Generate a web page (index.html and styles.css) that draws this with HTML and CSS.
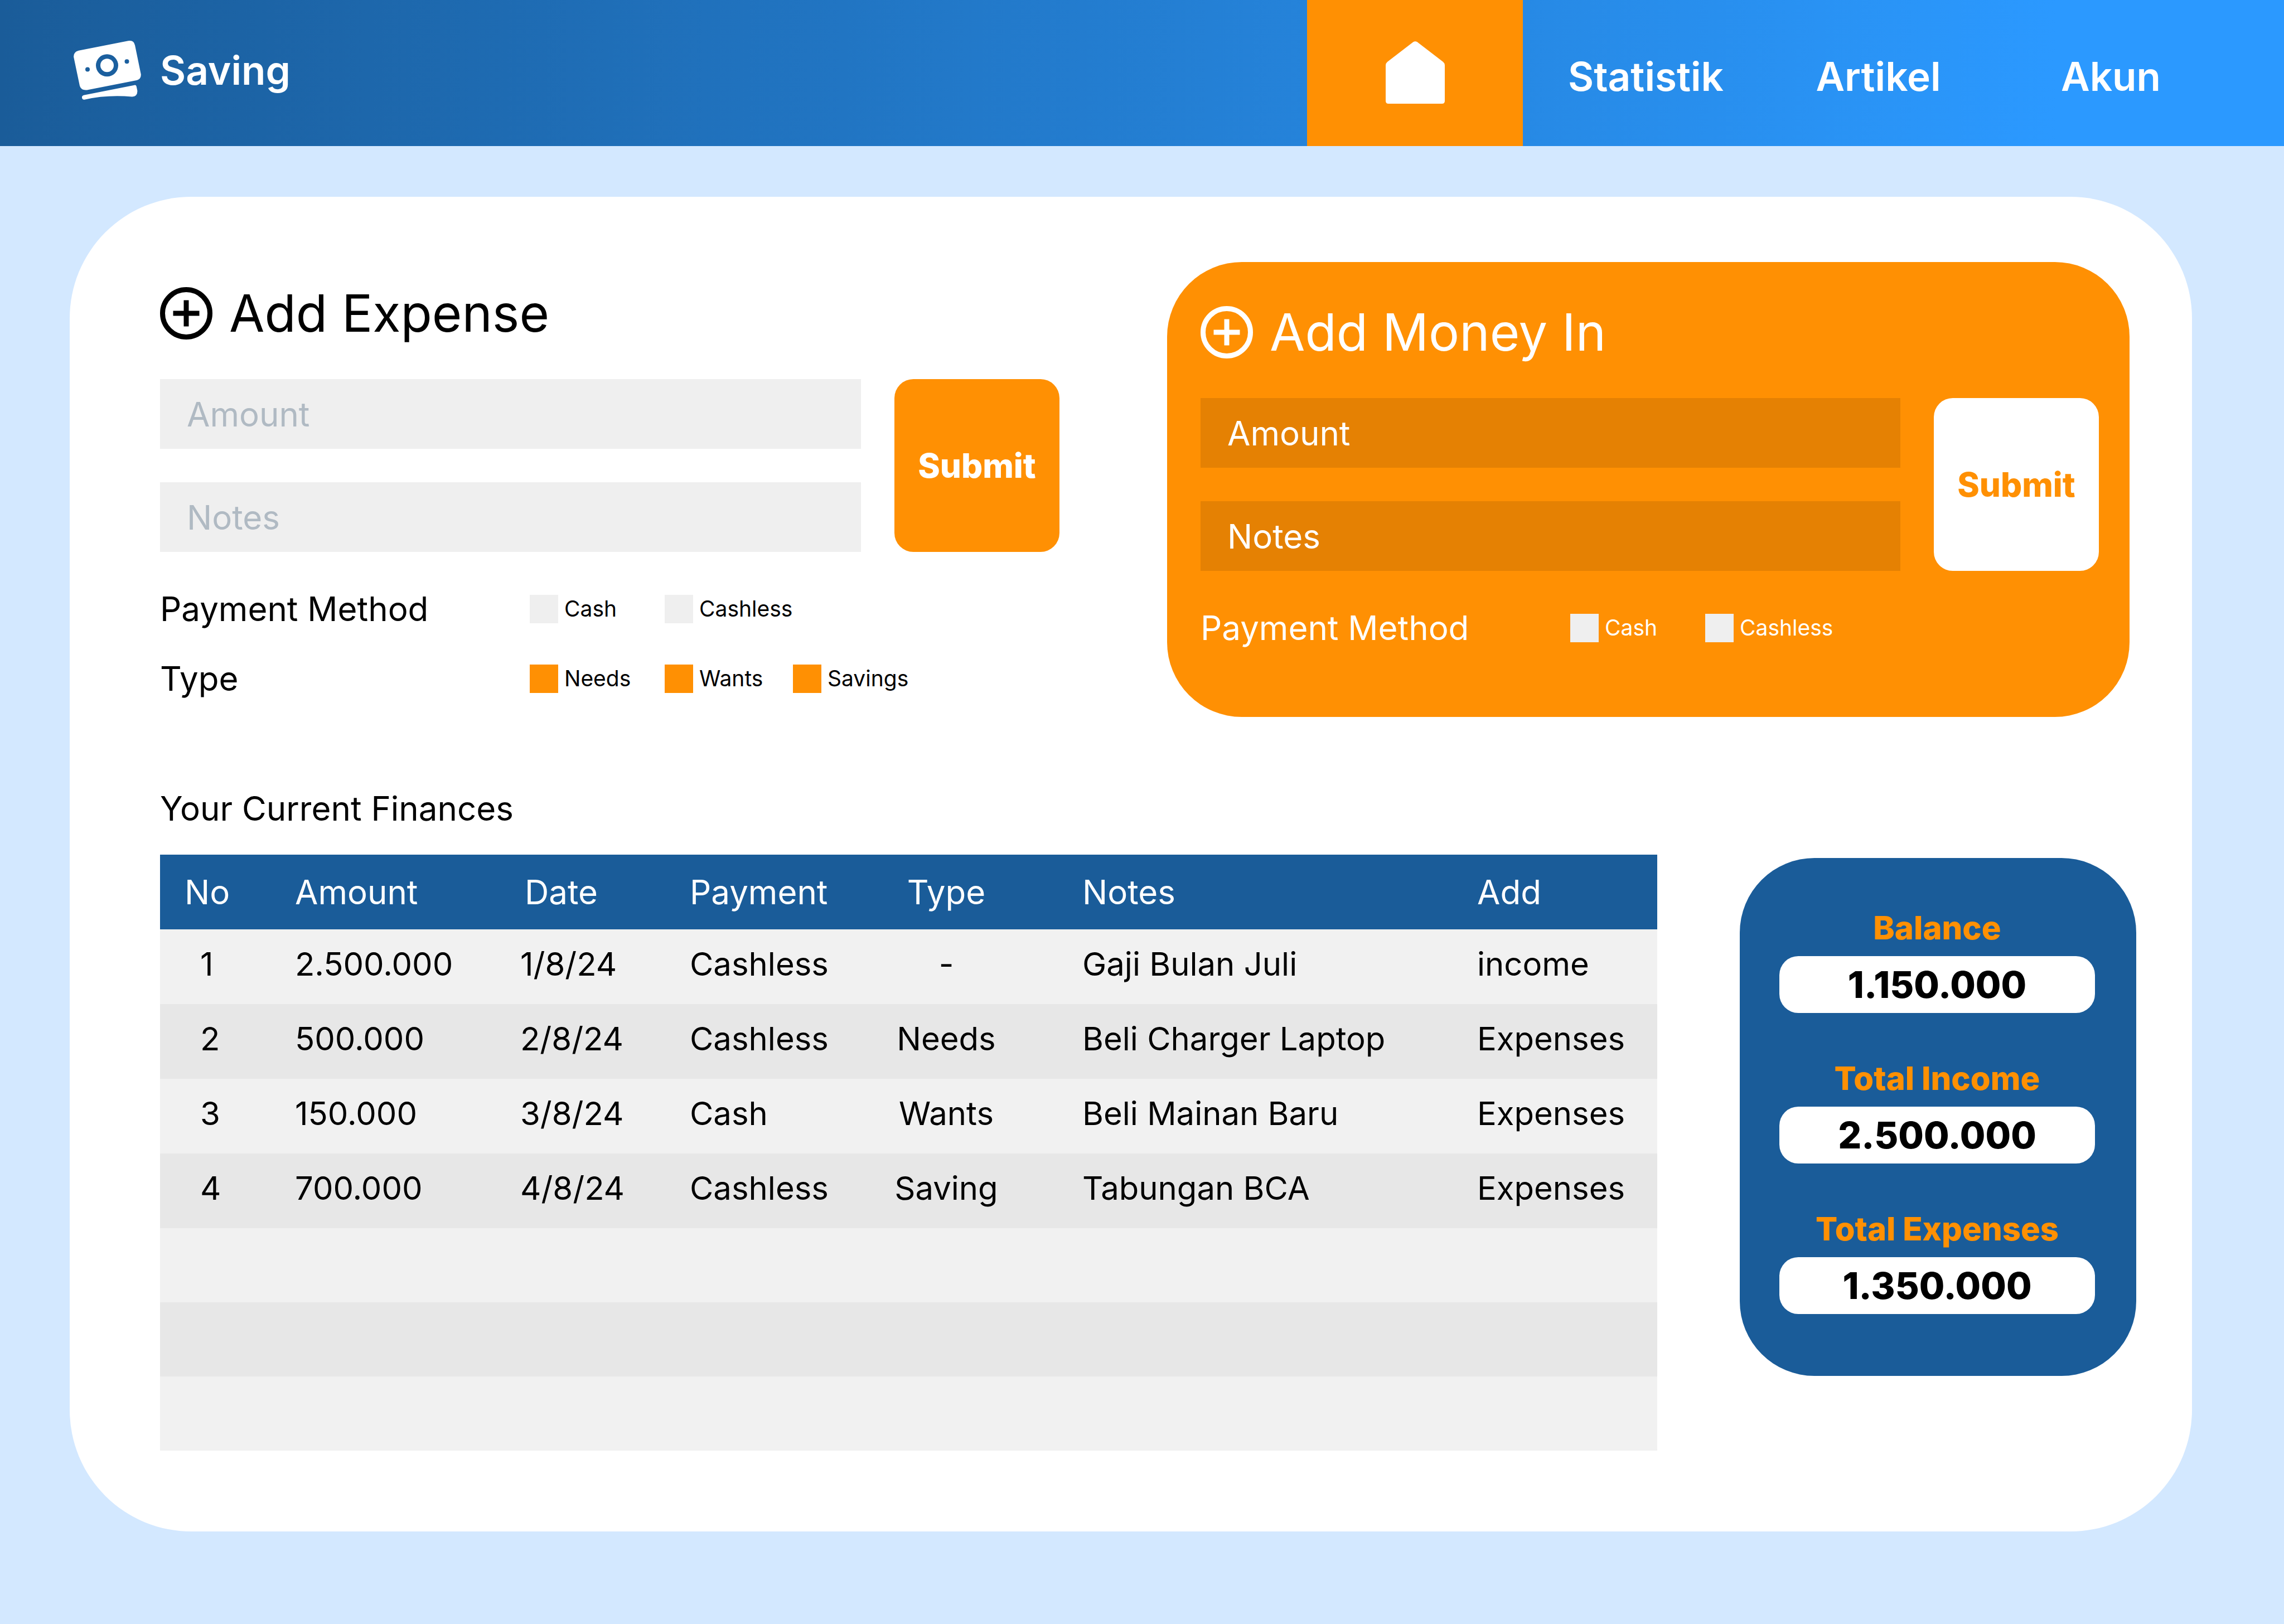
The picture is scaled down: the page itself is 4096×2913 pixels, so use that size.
FILE: index.html
```html
<!DOCTYPE html>
<html lang="id">
<head>
<meta charset="utf-8">
<meta name="viewport" content="width=device-width, initial-scale=1">
<title>Saving</title>
<link rel="stylesheet" href="styles.css">
</head>
<body>
<header class="topbar">
  <a class="brand" href="#">
    <svg class="brand-icon" viewBox="0 0 121 106" aria-hidden="true">
      <path fill="#fff" fill-rule="evenodd" d="M9 17.8 98 .3Q108 -1.500 110 8L120.700 60Q121.500 68.500 113 70.900L24 88.400Q13.500 89.500 11 81L.2 29.500Q-.8 20.500 9 17.800ZM60 24.300a20 20 0 1 0 0 40a20 20 0 1 0 0-40ZM25 47.400a4 4 0 1 0 0 8a4 4 0 1 0 0-8ZM95.500 33.200a4 4 0 1 0 0 8a4 4 0 1 0 0-8Z"/>
      <circle cx="60" cy="44.300" r="12" fill="#fff"/>
      <path fill="#fff" d="M18 97.800 109 79.700Q112 79.200 112.700 82L114.300 89.500Q115 100 105 100.500Q60 96.500 19.500 105.700Q16 106.300 15 102.500Q14.500 99 18 97.800Z"/>
    </svg>
    <span class="brand-name">Saving</span>
  </a>
  <nav class="nav">
    <a class="nav-home" href="#" aria-label="Home">
      <svg class="home-icon" viewBox="0 0 106 112" aria-hidden="true">
        <path fill="#fff" d="M49.500 1.300Q53 -.8 56.500 1.300L103 37Q106 39.500 106 43V107Q106 112 101 112H5Q0 112 0 107V43Q0 39.500 3 37Z"/>
      </svg>
    </a>
    <a class="nav-link" href="#">Statistik</a>
    <a class="nav-link" href="#">Artikel</a>
    <a class="nav-link" href="#">Akun</a>
  </nav>
</header>

<main class="page">
  <div class="panel">
    <div class="forms">
      <form class="entry">
        <h2 class="entry-title">
          <svg class="plus-icon" viewBox="0 0 94 94" fill="none" stroke="currentColor" stroke-width="9" aria-hidden="true"><circle cx="47" cy="47" r="42.500"/><path d="M47 23.500V70.500M23.500 47H70.500"/></svg>
          Add Expense
        </h2>
        <div class="fields">
          <input class="field" type="text" placeholder="Amount" aria-label="Amount">
          <input class="field" type="text" placeholder="Notes" aria-label="Notes">
          <button class="submit" type="button">Submit</button>
        </div>
        <div class="choices">
          <div class="choice-row" role="group" aria-labelledby="expense-method">
            <span class="choice-title" id="expense-method">Payment Method</span>
            <label class="choice"><input class="box" type="checkbox">Cash</label>
            <label class="choice"><input class="box" type="checkbox">Cashless</label>
          </div>
          <div class="choice-row" role="group" aria-labelledby="expense-type">
            <span class="choice-title" id="expense-type">Type</span>
            <label class="choice"><input class="box" type="checkbox" checked>Needs</label>
            <label class="choice"><input class="box" type="checkbox" checked>Wants</label>
            <label class="choice"><input class="box" type="checkbox" checked>Savings</label>
          </div>
        </div>
      </form>

      <form class="entry entry-income">
        <h2 class="entry-title">
          <svg class="plus-icon" viewBox="0 0 94 94" fill="none" stroke="currentColor" stroke-width="9" aria-hidden="true"><circle cx="47" cy="47" r="42.500"/><path d="M47 23.500V70.500M23.500 47H70.500"/></svg>
          Add Money In
        </h2>
        <div class="fields">
          <input class="field" type="text" placeholder="Amount" aria-label="Amount">
          <input class="field" type="text" placeholder="Notes" aria-label="Notes">
          <button class="submit" type="button">Submit</button>
        </div>
        <div class="choices">
          <div class="choice-row" role="group" aria-labelledby="income-method">
            <span class="choice-title" id="income-method">Payment Method</span>
            <label class="choice"><input class="box" type="checkbox">Cash</label>
            <label class="choice"><input class="box" type="checkbox">Cashless</label>
          </div>
        </div>
      </form>
    </div>

    <section class="finances">
      <h2 class="finances-title">Your Current Finances</h2>
      <table class="ledger">
        <colgroup>
          <col class="col-no"><col class="col-amount"><col class="col-date"><col class="col-payment"><col class="col-type"><col><col class="col-add">
        </colgroup>
        <thead>
          <tr><th class="no">No</th><th>Amount</th><th class="date">Date</th><th>Payment</th><th class="type">Type</th><th class="notes">Notes</th><th>Add</th></tr>
        </thead>
        <tbody>
          <tr><td class="no">1</td><td>2.500.000</td><td>1/8/24</td><td>Cashless</td><td class="type">-</td><td class="notes">Gaji Bulan Juli</td><td>income</td></tr>
          <tr><td class="no">2</td><td>500.000</td><td>2/8/24</td><td>Cashless</td><td class="type">Needs</td><td class="notes">Beli Charger Laptop</td><td>Expenses</td></tr>
          <tr><td class="no">3</td><td>150.000</td><td>3/8/24</td><td>Cash</td><td class="type">Wants</td><td class="notes">Beli Mainan Baru</td><td>Expenses</td></tr>
          <tr><td class="no">4</td><td>700.000</td><td>4/8/24</td><td>Cashless</td><td class="type">Saving</td><td class="notes">Tabungan BCA</td><td>Expenses</td></tr>
          <tr class="blank"><td colspan="7"></td></tr>
          <tr class="blank"><td colspan="7"></td></tr>
          <tr class="blank"><td colspan="7"></td></tr>
        </tbody>
      </table>
      <dl class="summary">
        <div class="summary-item"><dt class="summary-label">Balance</dt><dd class="summary-value">1.150.000</dd></div>
        <div class="summary-item"><dt class="summary-label">Total Income</dt><dd class="summary-value">2.500.000</dd></div>
        <div class="summary-item"><dt class="summary-label">Total Expenses</dt><dd class="summary-value">1.350.000</dd></div>
      </dl>
    </section>
  </div>
</main>
</body>
</html>
```
FILE: styles.css
```css
:root {
  --blue: #1a5c99;
  --orange: #ff9003;
  --orange-dark: #e58103;
  --gray: #efefef;
}

*, *::before, *::after { box-sizing: border-box; }

body {
  display: flex;
  flex-direction: column;
  min-height: 100vh;
  margin: 0;
  background: #d3e8ff;
  color: #000;
  font-family: Inter, sans-serif;
  font-size: 60px;
  line-height: 60px;
}

h2, dl, dd { margin: 0; font-weight: 400; }
a { color: inherit; text-decoration: none; }
input, button { margin: 0; border: 0; font: inherit; }

/* Top bar */
.topbar {
  display: flex;
  justify-content: space-between;
  height: 262px;
  padding: 0 102px 0 132px;
  background: linear-gradient(90deg, var(--blue), #2b99ff 90%);
  color: #fff;
  font-size: 71px;
  font-weight: 600;
  line-height: 80px;
}
.brand { display: flex; align-items: center; gap: 34px; padding-bottom: 10px; }
.brand-icon { width: 121px; height: 106px; }
.nav { display: flex; }
.nav-home {
  display: flex;
  align-items: center;
  justify-content: center;
  width: 387px;
  margin-right: 12px;
  padding-bottom: 3px;
  background: var(--orange);
}
.home-icon { width: 106px; height: 112px; }
.nav-link {
  display: flex;
  align-items: center;
  justify-content: center;
  width: 417px;
  padding-top: 12px;
}

/* White sheet */
.page { display: flex; flex: 1; padding: 91px 165px 166px 125px; }
.panel {
  flex: 1;
  padding: 117px 100px 145px 162px;
  border-radius: 218px;
  background: #fff;
}

/* Entry forms */
.forms {
  display: grid;
  grid-template-columns: 1613fr 1726fr;
  gap: 193px;
  padding-right: 12px;
}
.entry { padding-top: 45px; }
.entry-income {
  padding: 79px 55px 130px 60px;
  border-radius: 134px;
  background: var(--orange);
  color: #fff;
}
.entry-title {
  display: flex;
  align-items: center;
  gap: 30px;
  font-size: 92px;
  line-height: 94px;
}
.plus-icon { width: 94px; height: 94px; }
.fields {
  display: grid;
  grid-template-columns: 1fr 296px;
  grid-auto-flow: column;
  grid-template-rows: 125px 125px;
  gap: 60px;
  margin-top: 71px;
}
.field {
  width: 100%;
  padding: 0 48px;
  background: var(--gray);
}
.field::placeholder { color: #b0bac3; opacity: 1; }
.submit {
  grid-column: 2;
  grid-row: 1 / 3;
  padding: 0;
  border-radius: 34px;
  background: var(--orange);
  color: #fff;
  font-weight: 800;
}
.entry-income .field { background: var(--orange-dark); color: #fff; }
.entry-income .field::placeholder { color: #fff; }
.entry-income .submit { background: #fff; color: var(--orange); }

.choices { display: grid; gap: 65px; margin-top: 72px; }
.choice-row {
  display: grid;
  grid-template-columns: 663px 242px 230px 1fr;
  align-items: center;
}
.choice {
  display: flex;
  align-items: center;
  gap: 11px;
  font-size: 39px;
}
.box {
  appearance: none;
  width: 51px;
  height: 51px;
  background: var(--gray);
}
.box:checked { background: var(--orange); }

/* Finances */
.finances {
  display: grid;
  grid-template-columns: 2685fr 711fr;
  align-items: start;
  column-gap: 148px;
  margin-top: 134px;
}
.finances-title {
  grid-column: 1 / 3;
  margin-bottom: 53px;
  font-size: 60px;
}
.ledger {
  width: 100%;
  border-collapse: collapse;
  table-layout: fixed;
}
.col-no { width: 242px; }
.col-amount { width: 404px; }
.col-date { width: 304px; }
.col-payment { width: 280px; }
.col-type { width: 360px; }
.col-add { width: 323px; }
.ledger th, .ledger td {
  height: 134px;
  padding: 0;
  text-align: left;
  white-space: nowrap;
}
.ledger th { font-weight: 400; }
.ledger td { padding-bottom: 10px; font-size: 58px; }
.ledger .blank td { height: 133px; }
.ledger th.no { padding-left: 44px; }
.ledger td.no { padding-left: 72px; }
.ledger th.date { padding-left: 8px; }
.ledger .type { text-align: center; }
.ledger .notes { padding-left: 64px; }
.ledger thead { background: var(--blue); color: #fff; }
.ledger tbody tr { background: #f1f1f1; }
.ledger tbody tr:nth-child(even) { background: #e7e7e7; }

.summary {
  display: grid;
  gap: 87px;
  margin-top: 6px;
  padding: 95px 74px 111px 71px;
  border-radius: 134px;
  background: var(--blue);
  text-align: center;
}
.summary-item { display: grid; gap: 21px; }
.summary-label { color: var(--orange); font-size: 58px; font-weight: 800; }
.summary-value {
  border-radius: 34px;
  background: #fff;
  font-size: 66px;
  font-weight: 800;
  line-height: 102px;
}
```
